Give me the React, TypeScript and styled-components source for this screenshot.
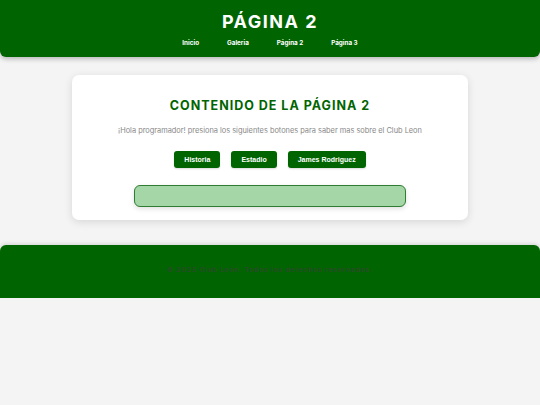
import styled, { createGlobalStyle } from 'styled-components'

const GlobalStyle = createGlobalStyle`
  body {
    margin: 0;
    background: #f4f4f4;
    font-family: Inter, 'Open Sans', sans-serif;
  }
`

const Header = styled.header`
  background: #006400;
  color: #ffffff;
  text-align: center;
  padding: 10px 0 10px;
  border-radius: 0 0 6px 6px;
  box-shadow: 0 2px 5px rgba(0, 0, 0, 0.25);
`

const Title = styled.h1`
  margin: 0;
  font-size: 18px;
  line-height: 24px;
  font-weight: 700;
  letter-spacing: 1.5px;
`

const Nav = styled.nav`
  display: flex;
  justify-content: center;
  gap: 28px;
  margin-top: 5px;
`

const NavLink = styled.a`
  color: #ffffff;
  font-size: 6.3px;
  font-weight: 700;
  line-height: 8px;
  text-decoration: none;
`

const Main = styled.main`
  padding: 18px 0 25px;
`

const Card = styled.section`
  width: 396px;
  margin: 0 auto;
  background: #ffffff;
  border-radius: 7px;
  box-shadow: 0 2px 8px rgba(0, 0, 0, 0.12);
  padding: 22px 0 13px;
  box-sizing: border-box;
  text-align: center;
`

const CardTitle = styled.h2`
  margin: 0;
  color: #006400;
  font-size: 12.5px;
  line-height: 18px;
  font-weight: 700;
  letter-spacing: 1px;
`

const Intro = styled.p`
  margin: 11px 0 0;
  color: #888888;
  font-size: 7.4px;
  line-height: 10px;
`

const Buttons = styled.div`
  display: flex;
  justify-content: center;
  gap: 11px;
  margin-top: 15px;
`

const Button = styled.button`
  height: 17px;
  padding: 0 10px;
  background: #006400;
  color: #ffffff;
  border: none;
  border-radius: 3px;
  font-family: 'Liberation Sans', Arial, sans-serif;
  font-size: 7px;
  font-weight: 700;
  box-shadow: 0 1px 2px rgba(0, 0, 0, 0.15);
`

const InfoBox = styled.div`
  width: 272px;
  height: 22px;
  margin: 17px auto 0;
  box-sizing: border-box;
  background: #a5d6a7;
  border: 1px solid #2e7d32;
  border-radius: 6px;
  box-shadow: 0 2px 5px rgba(0, 0, 0, 0.12);
`

const Footer = styled.footer`
  background: #006400;
  border-radius: 6px 6px 0 0;
  box-shadow: 0 -1px 4px rgba(0, 0, 0, 0.15);
  height: 53px;
  box-sizing: border-box;
  padding-bottom: 4px;
  display: flex;
  align-items: center;
  justify-content: center;
`

const FooterText = styled.p`
  margin: 0;
  color: #2a4a2a;
  font-size: 6.5px;
  font-weight: 700;
  letter-spacing: 0.9px;
`

const links = ['Inicio', 'Galeria', 'Página 2', 'Página 3']
const buttons = ['Historia', 'Estadio', 'James Rodriguez']

export default function App() {
  return (
    <>
      <GlobalStyle />
      <Header>
        <Title>PÁGINA 2</Title>
        <Nav>
          {links.map((link) => (
            <NavLink key={link} href="#">
              {link}
            </NavLink>
          ))}
        </Nav>
      </Header>
      <Main>
        <Card>
          <CardTitle>CONTENIDO DE LA PÁGINA 2</CardTitle>
          <Intro>
            ¡Hola programador! presiona los siguientes botones para saber mas
            sobre el Club Leon
          </Intro>
          <Buttons>
            {buttons.map((label) => (
              <Button key={label}>{label}</Button>
            ))}
          </Buttons>
          <InfoBox />
        </Card>
      </Main>
      <Footer>
        <FooterText>© 2025 Club León. Todos los derechos reservados.</FooterText>
      </Footer>
    </>
  )
}
